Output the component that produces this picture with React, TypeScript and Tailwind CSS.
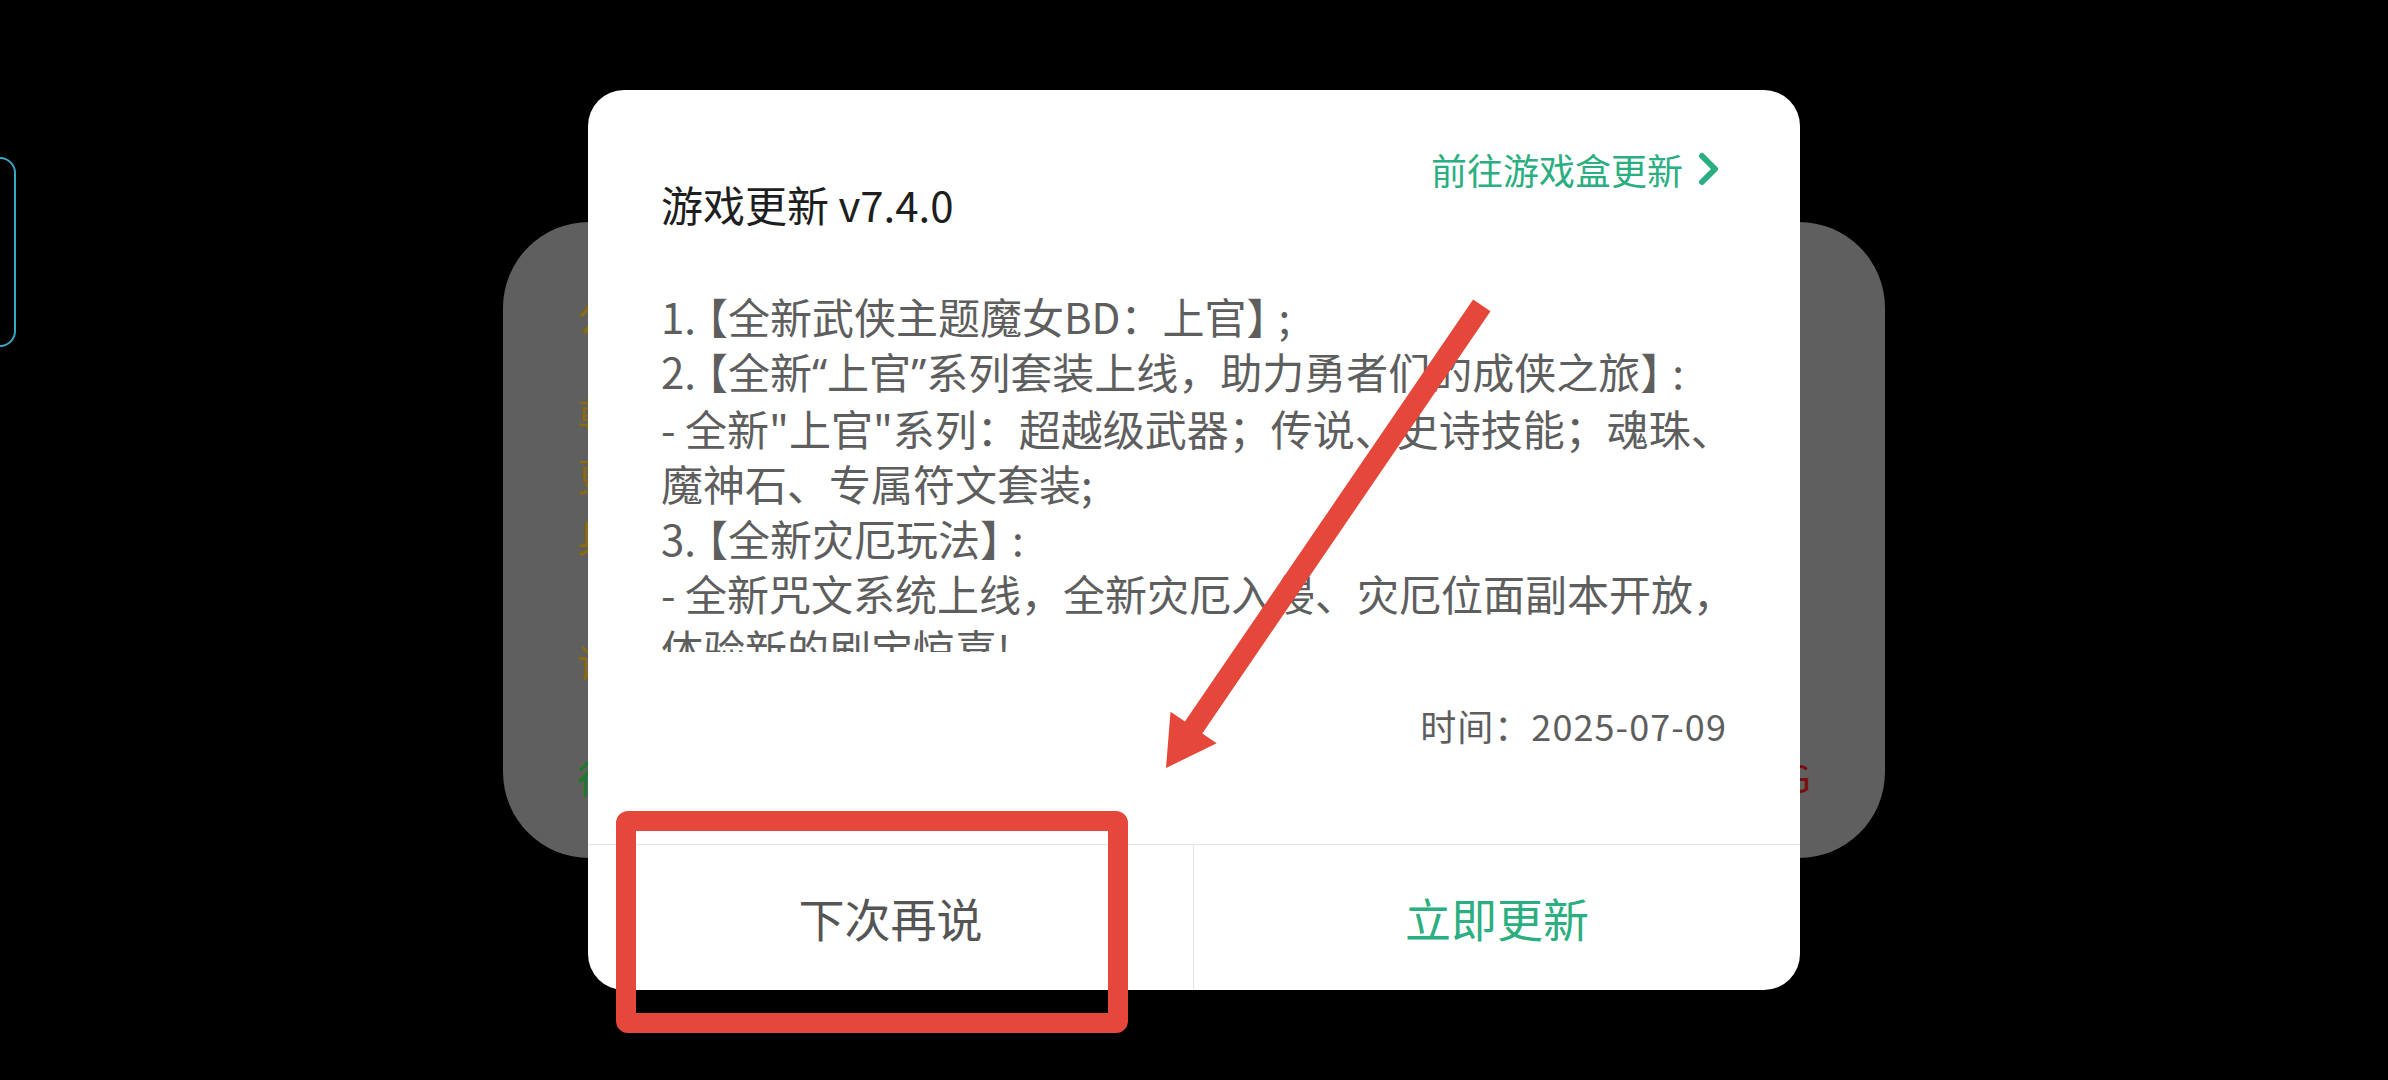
import React from "react";

const FONT = { fontFamily: '"Noto Sans CJK SC", "Noto Sans", sans-serif' };

const Q = ({ children }: { children: React.ReactNode }) => (
  <span style={{ fontFamily: '"Noto Sans", "Liberation Sans", sans-serif' }}>{children}</span>
);
const L = () => <span className="ml-[-10px]">【</span>;
const R = () => <span className="mr-[-10px]">】</span>;

function BackPanel() {
  return (
    <div
      className="w-[1382px] h-[636px] rounded-[86px] bg-[#5f5f5f] flex flex-col px-[74px] pt-[68px] text-[38px] leading-[48px]"
      style={FONT}
    >
      <div className="text-[#8a6a14] text-[42px] leading-[50px]">公</div>
      <div className="mt-[50px] flex flex-col gap-[13px] text-[#8a6a14]">
        <div className="flex justify-between whitespace-nowrap">
          <span>尊</span>
          <span>】</span>
        </div>
        <div className="flex justify-between whitespace-nowrap">
          <span>更</span>
          <span>】</span>
        </div>
        <div className="flex justify-between whitespace-nowrap">
          <span>具</span>
          <span>。</span>
        </div>
      </div>
      <div className="mt-[77px] text-[#8a6a14] whitespace-nowrap">请</div>
      <div className="mt-[68px] flex justify-between whitespace-nowrap">
        <span className="text-[#1b7a2b]">往</span>
        <span className="text-[#7a0e0e]">G</span>
      </div>
    </div>
  );
}

function Dialog() {
  return (
    <div className="w-[1212px] h-[900px] rounded-[36px] bg-white overflow-hidden flex flex-col" style={FONT}>
      <div className="flex justify-between items-start px-[73px] pt-[59px] pr-[79px]">
        <div className="mt-[30px] text-[42px] leading-[50px] text-[#1e1e1e] whitespace-nowrap">游戏更新 v7.4.0</div>
        <div className="flex items-center gap-[14px] h-[40px] text-[36px] leading-[40px] text-[#2bae80] whitespace-nowrap">
          <span>前往游戏盒更新</span>
          <svg width="24" height="34" viewBox="0 0 24 34" fill="none">
            <path d="M5 4 L18 17 L5 30" stroke="#2bae80" strokeWidth="6" strokeLinecap="round" strokeLinejoin="round" />
          </svg>
        </div>
      </div>
      <div className="mt-[59px] h-[364px] overflow-hidden px-[73px] text-[42px] leading-[55px] text-[#5e5e5e]">
        <div className="whitespace-nowrap">
          1.<L />全新武侠主题魔女BD：上官<R />;
        </div>
        <div className="whitespace-nowrap">
          2.<L />全新<Q>“</Q>上官<Q>”</Q>系列套装上线，助力勇者们的成侠之旅<R />:
        </div>
        <div className="whitespace-nowrap">- 全新"上官"系列：超越级武器；传说、史诗技能；魂珠、</div>
        <div className="whitespace-nowrap">魔神石、专属符文套装;</div>
        <div className="whitespace-nowrap">
          3.<L />全新灾厄玩法<R />:
        </div>
        <div className="whitespace-nowrap">- 全新咒文系统上线，全新灾厄入侵、灾厄位面副本开放，</div>
        <div className="whitespace-nowrap">体验新的刷宝惊喜!</div>
      </div>
      <div className="mt-[51px] flex justify-end px-[73px] text-[36px] leading-[44px] text-[#5e5e5e] whitespace-nowrap tracking-[0.03em]">
        时间：2025-07-09
      </div>
      <div className="flex-1" />
      <div className="h-[146px] border-t border-[#e3e3e3] grid grid-cols-2">
        <div className="flex items-center justify-center border-r border-[#e3e3e3] text-[46px] text-[#555555]">
          下次再说
        </div>
        <div className="flex items-center justify-center text-[46px] text-[#2bae80]">立即更新</div>
      </div>
    </div>
  );
}

export default function App() {
  return (
    <div className="relative w-[2388px] h-[1080px] bg-black overflow-hidden flex items-center justify-center">
      <div className="absolute left-[-40px] top-[157px] w-[56px] h-[190px] rounded-[16px] border-2 border-[#39a7c6]" />
      <BackPanel />
      <div className="absolute inset-0 flex items-center justify-center">
        <Dialog />
      </div>
      <div className="absolute left-[616px] top-[811px] w-[512px] h-[222px] border-[20px] border-[#e5473a] rounded-[12px]" />
      <svg className="absolute left-0 top-0" width="2388" height="1080" viewBox="0 0 2388 1080">
        <polygon
          points="1166,768 1170.5,711.7 1184.9,721.6 1473.1,299.5 1490.5,311.3 1202.3,733.4 1216.7,743.3"
          fill="#e5473a"
        />
      </svg>
    </div>
  );
}
